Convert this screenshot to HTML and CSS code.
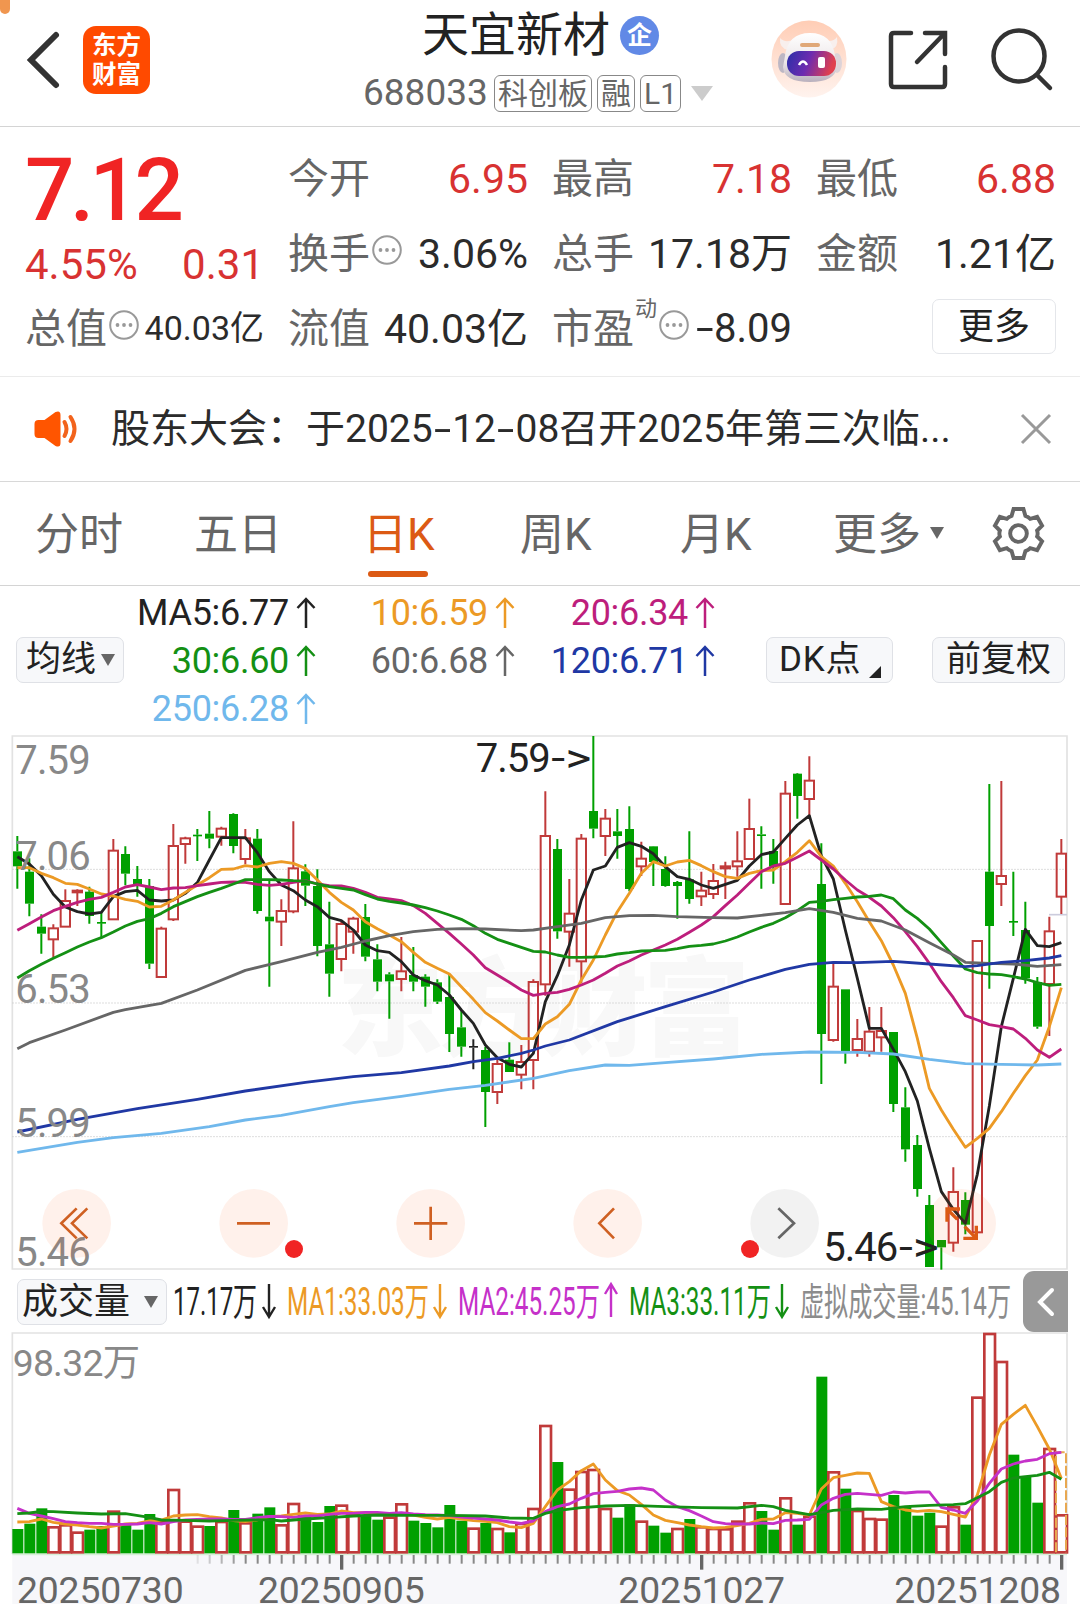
FILE: index.html
```html
<!DOCTYPE html>
<html lang="zh-CN">
<head>
  <meta charset="UTF-8">
  <title>天宜新材 688033</title>
  <link rel="stylesheet" href="styles.css">
</head>
<body>

<header class="header">
  <span class="corner"></span>
  <svg class="back" viewBox="0 0 36 60"><path d="M31 5 L6 30 L31 55"/></svg>
  <div class="logo">东方<br>财富</div>
  <div class="title">
    <div class="name">天宜新材<span class="badge">企</span></div>
    <div class="code">
      <span class="num">688033</span>
      <span class="tag">科创板</span>
      <span class="tag">融</span>
      <span class="tag">L1</span>
      <svg class="caret" viewBox="0 0 22 15"><path d="M0 0H22L11 15Z"/></svg>
    </div>
  </div>
  <svg class="robot" viewBox="0 0 76 78">
    <defs>
      <linearGradient id="halo" x1="0" y1="0" x2="0" y2="1">
        <stop offset="0" stop-color="#ffcdb5"/><stop offset="1" stop-color="#fff3ee"/>
      </linearGradient>
      <linearGradient id="visor" x1="0" y1="0" x2="1" y2="0.2">
        <stop offset="0" stop-color="#2a2fa8"/><stop offset="0.5" stop-color="#6d2bb0"/><stop offset="1" stop-color="#e0404f"/>
      </linearGradient>
      <linearGradient id="helmet" x1="0" y1="0" x2="0" y2="1">
        <stop offset="0" stop-color="#ffffff"/><stop offset="0.6" stop-color="#ece6e8"/><stop offset="1" stop-color="#b9b0bd"/>
      </linearGradient>
    </defs>
    <ellipse cx="38" cy="39" rx="37.5" ry="38.5" fill="url(#halo)"/>
    <path d="M9 18 Q8 28 17 30 L23 20 Q13 23 9 18Z M66 17 Q68 28 59 30 L52 20 Q62 23 66 17Z" fill="#f8efed"/>
    <ellipse cx="12" cy="43" rx="5" ry="10" fill="#bdb7c4"/>
    <ellipse cx="66" cy="43" rx="5" ry="10" fill="#ddd3d8"/>
    <path d="M14 36 Q17 13 39 13 Q61 13 64 36 L66 47 Q64 62 39 62 Q13 62 12 47Z" fill="url(#helmet)"/>
    <rect x="16" y="31" width="49" height="25" rx="12" fill="url(#visor)"/>
    <rect x="29" y="23" width="20" height="4" rx="2" fill="#e0a878"/>
    <path d="M28 45 Q32 38 36 45" fill="none" stroke="#fff" stroke-width="2.5"/>
    <rect x="47" y="37" width="7" height="11" rx="2" fill="#fff"/>
  </svg>
  <svg class="share" viewBox="0 0 60 60"><path d="M23 3H6Q3 3 3 6V54Q3 57 6 57H54Q57 57 57 54V37M37 3H57V24M55 5L29 32"/></svg>
  <svg class="search" viewBox="0 0 62 64"><circle cx="28" cy="29" r="25.5"/><path d="M46 48L59 61"/></svg>
</header>

<section class="quote">
  <div class="col first">
    <div class="price">7.12</div>
    <div class="row change up"><span>4.55%</span><span>0.31</span></div>
    <div class="row"><span class="label">总值</span><svg class="dots" viewBox="0 0 30 30"><use href="#dots"/></svg><span class="small">40.03亿</span></div>
  </div>
  <div class="col">
    <div class="row"><span class="label">今开</span><span class="up">6.95</span></div>
    <div class="row"><span class="label">换手</span><svg class="dots" viewBox="0 0 30 30"><use href="#dots"/></svg><span>3.06%</span></div>
    <div class="row"><span class="label">流值</span><span>40.03亿</span></div>
  </div>
  <div class="col">
    <div class="row"><span class="label">最高</span><span class="up">7.18</span></div>
    <div class="row"><span class="label">总手</span><span>17.18万</span></div>
    <div class="row"><span class="label">市盈<sup>动</sup></span><svg class="dots" viewBox="0 0 30 30"><use href="#dots"/></svg><span class="pe"><i class="dash">-</i>8.09</span></div>
  </div>
  <div class="col">
    <div class="row"><span class="label">最低</span><span class="up">6.88</span></div>
    <div class="row"><span class="label">金额</span><span>1.21亿</span></div>
    <div class="row"><button class="more">更多</button></div>
  </div>
</section>

<section class="notice">
  <svg class="horn" viewBox="0 0 44 38">
    <path class="body" d="M5 10H11L22 2Q27 0 27 5V33Q27 38 22 36L11 28H5Q1 28 1 24V14Q1 10 5 10Z"/>
    <path class="wave" d="M31 12Q35 19 31 26M37 7Q45 19 37 31"/>
  </svg>
  <div class="notice-text">股东大会：于2025<i class="dash">-</i>12<i class="dash">-</i>08召开2025年第三次临...</div>
  <svg class="close" viewBox="0 0 30 30"><path d="M1 1L29 29M29 1L1 29"/></svg>
</section>

<nav class="tabs">
  <span>分时</span>
  <span>五日</span>
  <span class="active">日K</span>
  <span>周K</span>
  <span>月K</span>
  <span>更多<svg class="tri" viewBox="0 0 14 12"><path d="M0 0H14L7 12Z"/></svg></span>
  <svg class="gear" viewBox="0 0 54 54">
    <path d="M22 2H32L34 9Q37 10 39 12L46 10L51 19L46 24Q47 27 46 30L51 35L46 44L39 42Q37 44 34 45L32 52H22L20 45Q17 44 15 42L8 44L3 35L8 30Q7 27 8 24L3 19L8 10L15 12Q17 10 20 9Z"/>
    <circle cx="27" cy="27" r="8.500"/>
  </svg>
</nav>

<section class="averages">
  <button class="chip">均线<svg class="tri" viewBox="0 0 14 12"><path d="M0 0H14L7 12Z"/></svg></button>
  <div class="ma-list">
    <span class="ma5">MA5:6.77<svg viewBox="0 0 20 32"><use href="#up"/></svg></span>
    <span class="ma10">10:6.59<svg viewBox="0 0 20 32"><use href="#up"/></svg></span>
    <span class="ma20">20:6.34<svg viewBox="0 0 20 32"><use href="#up"/></svg></span>
    <span class="ma30">30:6.60<svg viewBox="0 0 20 32"><use href="#up"/></svg></span>
    <span class="ma60">60:6.68<svg viewBox="0 0 20 32"><use href="#up"/></svg></span>
    <span class="ma120">120:6.71<svg viewBox="0 0 20 32"><use href="#up"/></svg></span>
    <span class="ma250">250:6.28<svg viewBox="0 0 20 32"><use href="#up"/></svg></span>
  </div>
  <button class="chip dk">DK点<svg viewBox="0 0 12 12"><path d="M12 0V12H0Z"/></svg></button>
  <button class="chip fq">前复权</button>
</section>

<svg class="kline" viewBox="0 0 3240 1623">
  <text class="watermark" x="1010" y="950" textLength="1240">东方财富</text>
  <path class="frame" d="M37 1617V18H3201V1617Z"/>
  <path class="grid" d="M37 418H3201M37 819H3201M37 1220H3201"/>
  <path class="last" d="M3147 554H3201"/>
  <g id="candles"></g>
  <g id="lines"></g>
  <g class="axis">
    <text x="46" y="132" textLength="226">7.59</text>
    <text x="46" y="420" textLength="226">7.06</text>
    <text x="46" y="820" textLength="226">6.53</text>
    <text x="46" y="1220" textLength="226">5.99</text>
    <text x="46" y="1608" textLength="226">5.46</text>
  </g>
  <g class="mark">
    <text x="1427" y="125" textLength="225">7.59</text>
    <text x="1654" y="125" textLength="120" lengthAdjust="spacingAndGlyphs">-&gt;</text>
    <text x="2470" y="1592" textLength="225">5.46</text>
    <text x="2697" y="1592" textLength="120" lengthAdjust="spacingAndGlyphs">-&gt;</text>
  </g>
  <g class="controls">
    <circle cx="230" cy="1480" r="103"/>
    <circle cx="761" cy="1480" r="103"/>
    <circle cx="1292" cy="1480" r="103"/>
    <circle cx="1823" cy="1480" r="103"/>
    <circle class="off" cx="2354" cy="1480" r="103"/>
    <circle cx="2885" cy="1480" r="103"/>
    <path d="M230 1435L184 1480L230 1525M262 1435L216 1480L262 1525"/>
    <path d="M711 1480H810"/>
    <path d="M1242 1480H1342M1292 1430V1530"/>
    <path d="M1842 1435L1798 1480L1842 1525"/>
    <path class="off" d="M2335 1435L2382 1480L2335 1525"/>
    <path class="expand" d="M2880 1437H2841V1475M2841 1437L2872 1468M2890 1525H2929V1487M2929 1525L2894 1490"/>
  </g>
  <circle class="dot" cx="882" cy="1557" r="27"/>
  <circle class="dot" cx="2250" cy="1557" r="27"/>
</svg>

<section class="vol-head">
  <button class="chip vol-btn">成交量<svg class="tri" viewBox="0 0 14 12"><path d="M0 0H14L7 12Z"/></svg></button>
  <svg class="vol-legend" viewBox="167 0 856 61">
    <g class="ma5"><text x="173" y="44" textLength="84" lengthAdjust="spacingAndGlyphs">17.17万</text><path d="M269 13V45M263 36L269 46L275 36"/></g>
    <g class="ma10"><text x="287" y="44" textLength="142" lengthAdjust="spacingAndGlyphs">MA1:33.03万</text><path d="M440 13V45M434 36L440 46L446 36"/></g>
    <g class="vma2"><text x="458" y="44" textLength="142" lengthAdjust="spacingAndGlyphs">MA2:45.25万</text><path d="M611 46V14M605 23L611 13L617 23"/></g>
    <g class="ma30"><text x="629" y="44" textLength="142" lengthAdjust="spacingAndGlyphs">MA3:33.11万</text><path d="M782 13V45M776 36L782 46L788 36"/></g>
    <g class="virtual"><text x="800" y="44" textLength="211" lengthAdjust="spacingAndGlyphs">虚拟成交量:45.14万</text></g>
  </svg>
  <div class="side"><svg viewBox="0 0 18 30"><path d="M15 3L3 15L15 27"/></svg></div>
</section>

<svg class="volume" viewBox="0 36 3240 816">
  <rect class="dates-bg" x="37" y="702" width="3164" height="150"/>
  <path class="frame" d="M37 702V39H3201V702"/>
  <text class="vol-max" x="38" y="168" textLength="382">98.32万</text>
  <path class="base" d="M37 703H3201"/>
  <g id="bars"></g>
  <path class="predict" d="M3168 697V397H3198V697"/>
  <g id="vlines"></g>
  <g id="ticks"></g>
  <g class="dates">
    <text x="51" y="849" textLength="500">20250730</text>
    <text x="774" y="849" textLength="500">20250905</text>
    <text x="1855" y="849" textLength="500">20251027</text>
    <text x="2683" y="849" textLength="500">20251208</text>
  </g>
</svg>

<svg class="defs">
  <defs>
    <g id="dots">
      <circle cx="15" cy="15" r="13.8" fill="none" stroke="#999" stroke-width="2"/>
      <circle cx="8.5" cy="15" r="1.9" fill="#999"/><circle cx="15" cy="15" r="1.9" fill="#999"/><circle cx="21.5" cy="15" r="1.9" fill="#999"/>
    </g>
    <path id="up" d="M10 31V2M1.500 11L10 2L18.500 11" fill="none" stroke="currentColor" stroke-width="2.500"/>
  </defs>
</svg>

<script src="chart.js"></script>
</body>
</html>
```

FILE: styles.css
```css
* {
  box-sizing: border-box;
}

body {
  margin: 0;
  width: 1080px;
  height: 1604px;
  overflow: hidden;
  background: #fff;
  color: #2b2b2b;
  font-family: Roboto, "Noto Sans CJK SC", sans-serif;
}

svg {
  display: block;
  flex: none;
  overflow: visible;
}

button {
  font-family: inherit;
  color: #222;
  padding: 0;
}

.defs {
  width: 0;
  height: 0;
}

/* header */
.header {
  position: relative;
  display: flex;
  height: 127px;
  border-bottom: 1px solid #d4d4d4;
}

.corner {
  position: absolute;
  left: 0;
  top: 0;
  width: 10px;
  height: 14px;
  background: #f0964f;
  border-radius: 0 0 5px 5px;
}

.back {
  width: 36px;
  height: 60px;
  margin: 30px 0 0 25px;
  fill: none;
  stroke: #333;
  stroke-width: 6;
  stroke-linecap: round;
}

.logo {
  width: 67px;
  height: 68px;
  margin: 26px 0 0 22px;
  padding-top: 5px;
  border-radius: 13px;
  background: #ff4a00;
  color: #fff;
  font-size: 24.500px;
  font-weight: 700;
  line-height: 29px;
  text-align: center;
}

.title {
  width: 420px;
  margin-left: 213px;
}

.name {
  display: flex;
  align-items: center;
  height: 70px;
  padding-left: 59px;
  font-size: 47px;
  line-height: 70px;
  color: #222;
}

.badge {
  width: 39px;
  height: 39px;
  margin-left: 10px;
  border-radius: 50%;
  background: #6189e6;
  color: #fff;
  font-size: 25px;
  font-weight: 700;
  line-height: 39px;
  text-align: center;
}

.code {
  display: flex;
  align-items: center;
  height: 46px;
  color: #666;
}

.num {
  width: 131px;
  font-size: 37px;
  line-height: 46px;
}

.tag {
  height: 37px;
  margin-right: 5px;
  padding: 0 3px;
  border: 1.500px solid #888;
  border-radius: 6px;
  font-size: 30px;
  line-height: 35px;
}

.caret {
  width: 22px;
  height: 15px;
  margin-left: 5px;
  fill: #ccc;
}

.robot {
  width: 76px;
  height: 78px;
  margin: 20px 0 0 -12px;
}

.share {
  width: 60px;
  height: 60px;
  margin: 30px 0 0 41px;
  fill: none;
  stroke: #333;
  stroke-width: 4.500;
  stroke-linecap: round;
}

.search {
  width: 62px;
  height: 64px;
  margin: 27px 0 0 43px;
  fill: none;
  stroke: #333;
  stroke-width: 4.500;
  stroke-linecap: round;
}

/* quote panel */
.quote {
  display: flex;
  gap: 24px;
  height: 250px;
  padding: 12px 24px 0 25px;
  border-bottom: 1px solid #ebebeb;
}

.col {
  width: 240px;
  flex: none;
}

.first {
  width: 239px;
}

.row {
  display: flex;
  align-items: center;
  justify-content: space-between;
  height: 75px;
  font-size: 41px;
  line-height: 48px;
  white-space: nowrap;
}

.row span {
  padding-top: 4px;
}

.price {
  height: 87px;
  font-size: 87px;
  font-weight: 500;
  line-height: 102px;
  letter-spacing: -4.500px;
  color: #f02424;
}

.change {
  height: 64px;
  padding-top: 10px;
  font-size: 42px;
}

.first .row:last-child {
  height: 74px;
}

.label {
  position: relative;
  color: #666;
}

.label sup {
  position: absolute;
  left: 83px;
  top: -4px;
  font-size: 22px;
  line-height: 24px;
}

.label + .dots {
  width: 30px;
  height: 30px;
  margin: -4px auto 0 2px;
}

.label:has(sup) + .dots {
  margin-left: 25px;
}

.up {
  color: #d83232;
}

.row .small {
  padding-top: 2px;
  font-size: 34px;
}

.pe {
  font-size: 40px;
}

.dash {
  display: inline-block;
  width: 19.500px;
  font-style: normal;
  text-align: center;
  transform: scaleX(1.600);
}

.more {
  width: 124px;
  height: 55px;
  margin-left: auto;
  border: 1.500px solid #e4e6ea;
  border-radius: 7px;
  background: #fff;
  font-size: 36px;
  line-height: 50px;
}

/* notice */
.notice {
  display: flex;
  align-items: center;
  height: 105px;
  padding: 0 29px 0 33px;
  border-bottom: 1px solid #d8d8d8;
}

.horn {
  width: 45px;
  height: 38px;
}

.horn .body {
  fill: #ff5500;
}

.horn .wave {
  fill: none;
  stroke: #f2631c;
  stroke-width: 4;
  stroke-linecap: round;
}

.notice-text {
  margin: 0 auto 0 33px;
  font-size: 39px;
  line-height: 50px;
  white-space: nowrap;
}

.close {
  width: 30px;
  height: 30px;
  stroke: #999;
  stroke-width: 3;
}

/* tabs */
.tabs {
  display: grid;
  grid-template-columns: 159px 169px 157px 160px 153px 157px 54px;
  align-items: center;
  height: 104px;
  padding: 4px 0 0 35px;
  border-bottom: 1px solid #d4d4d4;
  color: #666;
  font-size: 44px;
  line-height: 99px;
}

.tabs span {
  position: relative;
  height: 99px;
  white-space: nowrap;
}

.tabs .active {
  color: #dc5a14;
}

.tabs .active::after {
  content: "";
  position: absolute;
  left: 5px;
  bottom: 8px;
  width: 60px;
  height: 6px;
  border-radius: 3px;
  background: #dc5a14;
}

.tri {
  display: inline-block;
  width: 14px;
  height: 12px;
  fill: #666;
}

.tabs .tri {
  margin: 0 0 11px 9px;
}

.gear {
  width: 53px;
  height: 53px;
  margin: -5px 0 0 2px;
  fill: none;
  stroke: #666;
  stroke-width: 4;
}

/* moving averages */
.averages {
  display: flex;
  height: 144px;
  padding: 3px 16px 0;
}

.chip {
  display: flex;
  align-items: center;
  height: 46px;
  border: 1.500px solid #dfe1e6;
  border-radius: 7px;
  background: #f7f8fa;
  font-size: 35px;
  line-height: 44px;
  white-space: nowrap;
}

.averages .chip {
  width: 108px;
  margin-top: 48px;
  padding-left: 9px;
  flex: none;
}

.averages .chip .tri {
  margin-left: 5px;
}

.averages .dk {
  width: 127px;
  margin-left: 51px;
  padding-left: 12px;
  letter-spacing: 0.8px;
}

.dk svg {
  width: 12px;
  height: 12px;
  margin: 23px 0 0 8px;
  fill: #222;
}

.averages .fq {
  width: 133px;
  margin-left: 39px;
  padding-left: 13px;
}

.ma-list {
  display: grid;
  grid-template-columns: 192px 199px 200px;
  grid-auto-rows: 48px;
  font-size: 36px;
  height: 144px;
}

.ma-list span {
  display: flex;
  justify-content: flex-end;
  align-items: center;
  letter-spacing: -0.3px;
}

.ma-list svg {
  width: 20px;
  height: 32px;
  margin-left: 7px;
}

.ma5 { color: #222; }
.ma10 { color: #ec9a25; }
.ma20 { color: #bd1e7c; }
.ma30 { color: #149014; }
.ma60 { color: #666; }
.ma120 { color: #2038a4; }
.ma250 { color: #70b8ec; }
.vma2 { color: #c531c9; }
.virtual { color: #8c8c8c; }

/* price chart, three units to a pixel */
.kline {
  width: 1080px;
  height: 541px;
}

.frame {
  fill: none;
  stroke: #e2e2e2;
  stroke-width: 5;
}

.grid {
  stroke: #ccc;
  stroke-width: 3;
  stroke-dasharray: 4 5;
}

.last {
  stroke: #ccd;
  stroke-width: 5;
}

.watermark {
  font-size: 320px;
  font-weight: 900;
  fill: #f8f8f8;
}

.axis text {
  font-size: 120px;
  fill: #888;
}

.mark text {
  font-size: 120px;
  fill: #222;
}

.candle {
  fill: none;
  stroke-width: 6;
}

.rise { stroke: #c03a3a; }
.fall { stroke: #00a000; fill: #00a000; }
.flat { stroke: #222; fill: #222; }

.candle .solid {
  stroke: none;
}

.line {
  fill: none;
  stroke: currentColor;
  stroke-width: 8.500;
  stroke-linejoin: round;
}

.controls circle {
  fill: #ff641e;
  fill-opacity: 0.090;
}

.controls circle.off {
  fill: #000;
  fill-opacity: 0.050;
}

.controls path {
  fill: none;
  stroke: #cf6022;
  stroke-width: 8;
}

.controls path.off {
  stroke: #666;
}

.controls path.expand {
  stroke: #dc5a14;
  stroke-width: 10;
}

.dot {
  fill: #f02424;
}

/* volume */
.vol-head {
  display: flex;
  height: 61px;
  padding: 0 12px 0 17px;
}

.vol-btn {
  width: 150px;
  margin-top: 8px;
  padding-left: 4px;
  font-size: 36px;
}

.vol-btn .tri {
  margin-left: 14px;
}

.vol-legend {
  width: 856px;
  height: 61px;
}

.vol-legend text {
  font-size: 38px;
  fill: currentColor;
}

.vol-legend path {
  fill: none;
  stroke: currentColor;
  stroke-width: 2.400;
}

.side {
  display: flex;
  align-items: center;
  justify-content: center;
  width: 45px;
  border-radius: 11px 0 0 11px;
  background: #999;
}

.side svg {
  width: 18px;
  height: 30px;
  fill: none;
  stroke: #fff;
  stroke-width: 4;
  stroke-linecap: round;
}

.volume {
  width: 1080px;
  height: 272px;
}

.vol-max {
  font-size: 112px;
  fill: #888;
}

.base {
  stroke: #d6efd6;
  stroke-width: 5;
}

.bar.rise {
  fill: #fff;
  stroke-width: 8;
}

.bar.fall {
  stroke: none;
}

.predict {
  fill: none;
  stroke: #e8a850;
  stroke-width: 6;
  stroke-dasharray: 30 7;
}

.dates-bg {
  fill: #f7f7fa;
}

.tick {
  stroke: #888;
  stroke-width: 6;
}

.tick.long {
  stroke: #666;
  stroke-width: 10;
}

.dates text {
  font-size: 112px;
  fill: #666;
}
```

FILE: chart.js
```js
// [type, high, body top, body bottom, low]
const candles = [
  ['g',318,364,409,476],['g',385,425,521,559],['g',553,590,611,671],['r',583,595,628,682],
  ['r',478,513,590,590],['r',478,482,487,528],['g',470,485,558,581],['g',548,576,580,622],
  ['r',327,362,568,568],['g',349,372,431,466],['g',408,447,462,500],['g',447,468,701,717],
  ['r',590,596,741,741],['r',282,348,568,573],['r',320,325,342,401],['g',297,314,317,393],
  ['g',243,311,326,355],['r',290,296,320,347],['g',250,252,348,370],['r',297,325,387,403],
  ['g',297,326,543,551],['g',450,560,574,770],['r',508,543,575,648],['r',274,415,544,550],
  ['g',403,424,467,528],['g',418,468,648,679],['g',515,643,731,800],['r',575,582,687,724],
  ['r',560,566,605,671],['g',522,561,680,694],['g',643,688,755,784],['g',727,733,754,866],
  ['r',621,724,747,784],['g',651,735,755,784],['g',733,740,770,830],['g',748,757,815,822],
  ['g',733,801,912,966],['g',842,892,950,980],['k',928,948,953,1018],['g',950,960,1086,1191],
  ['r',985,1002,1086,1122],['g',937,989,1026,1026],['r',945,996,1034,1078],['r',748,756,990,1078],
  ['r',184,318,763,797],['g',327,357,604,626],['r',447,551,605,710],['r',312,326,694,760],
  ['g',18,243,296,325],['r',237,266,318,378],['g',237,304,318,386],['g',229,297,477,484],
  ['r',335,386,409,438],['g',348,349,396,468],['g',379,417,468,470],['g',453,456,468,566],
  ['g',304,448,507,521],['r',425,482,499,528],['r',402,453,492,507],['r',395,409,415,507],
  ['r',304,394,409,440],['r',206,297,387,387],['g',289,313,317,476],['g',327,363,410,461],
  ['r',153,191,522,522],['g',129,131,198,266],['r',79,152,207,262],['g',340,462,912,1062],
  ['r',700,770,930,935],['g',778,778,965,1001],['r',867,927,960,980],['r',831,905,965,980],
  ['r',831,903,922,965],['g',906,906,1122,1146],['g',1072,1132,1258,1295],['g',1215,1245,1377,1400],
  ['g',1395,1425,1611,1611],['g',1530,1530,1552,1619],['r',1312,1386,1538,1565],['g',1387,1410,1484,1513],
  ['r',633,633,1507,1507],['g',162,425,588,776],['r',153,438,462,528],['g',425,573,577,618],
  ['g',515,600,745,761],['g',741,756,890,896],['r',560,604,762,918],['r',327,371,500,552]
];

const volumes = [
  627,611,565,622,616,638,629,618,575,612,629,582,606,510,605,620,618,606,570,610,581,562,
  616,552,590,606,558,557,585,585,599,593,553,602,609,622,555,602,626,609,627,637,612,567,
  318,426,509,456,450,567,593,553,605,617,638,627,597,622,627,628,605,550,573,629,535,614,
  590,170,457,506,573,597,599,525,560,587,578,620,562,614,233,42,126,404,469,548,387,586
];
const volumeColors = 'gggrrrggrgggrrrrgrgrggrrgggrrggrrgggggrgrgrrrgrrrrggrggrgrrrrrggrgrgrgrrrggggrrgrrrgggrr';

const ma5 = [380,402,437,493,531,545,552,547,500,485,481,510,513,510,490,458,390,323,323,323,368,425,465,482,510,530,562,572,600,645,662,667,695,735,752,765,795,840,880,945,983,1003,1011,970,815,737,645,510,420,408,352,338,349,371,410,440,448,465,475,463,451,408,374,366,325,285,257,378,447,600,745,895,895,958,1025,1113,1255,1385,1438,1480,1333,1128,890,745,598,647,650,638];
const ma10 = [413,413,430,443,460,463,477,492,498,508,514,531,529,510,487,465,443,418,417,407,411,400,395,400,415,450,487,517,540,575,596,615,635,667,697,715,732,770,808,848,873,900,926,926,882,860,823,750,690,615,545,490,430,395,408,396,391,407,425,440,445,430,422,420,395,367,332,380,408,460,515,575,632,705,790,925,1075,1140,1198,1252,1225,1195,1145,1090,1037,990,890,773];
const ma20 = [601,581,561,542,529,517,508,502,487,471,464,471,479,474,473,467,462,457,456,457,463,466,463,457,452,462,467,468,475,487,502,507,512,527,550,580,610,642,675,713,735,757,780,796,790,787,778,765,750,730,708,693,675,660,645,628,607,585,560,527,495,460,425,408,400,382,363,390,417,450,480,502,528,563,605,650,700,755,803,857,870,884,890,897,925,960,982,957];
const ma30 = [744,722,703,685,668,651,636,623,606,588,574,566,550,530,515,500,487,475,462,449,449,449,450,452,453,462,470,475,480,494,507,514,519,525,533,543,555,568,587,610,628,640,652,664,666,675,682,682,681,679,672,668,663,662,661,656,649,646,642,633,621,606,592,580,563,542,517,514,509,505,501,499,495,506,540,565,597,638,678,717,728,732,734,740,747,758,766,763];
const ma60 = {0:956,1:938,4:900,8:847,9:839,12:820,15:780,19:721,22:695,25:667,27:652,29:633,31:617,33:605,35:598,37:596,39:597,42:602,43:600,45:590,47:580,49:563,51:557,53:556,55:560,58:563,60:564,62:556,64:548,66:536,68:547,70:565,72:573,74:600,76:638,78:675,79:697,81:700,83:702,85:709,87:704};
const ma120 = {0:1206,5:1168,10:1136,15:1108,19:1083,24:1057,28:1040,32:1028,36:1008,38:995,40:985,42:970,43:960,44:948,46:930,50:875,54:830,58:786,61:750,64:718,66:703,68:697,70:698,73:694,76:702,79:710,80:707,82:697,84:692,86:684,87:677};
const ma250 = {0:1267,5:1237,8:1223,12:1210,16:1190,19:1170,22:1156,26:1130,28:1118,32:1099,36:1078,39:1066,43:1045,46:1022,49:1005,51:1006,54:998,58:987,62:973,66:966,70:967,73:972,76:988,79:1001,82:1003,85:1005,87:1002};

const v1 = [606,605,597,607,612,615,620,624,618,612,610,603,600,588,585,584,590,594,602,605,600,590,588,583,579,583,582,573,578,578,580,584,583,585,592,597,592,597,602,604,608,620,623,610,560,510,485,452,432,480,512,525,553,585,601,608,615,620,624,622,617,610,598,597,578,580,585,507,473,466,459,460,545,560,570,574,571,575,583,591,525,405,313,283,256,320,387,475];
const v2 = [565,580,588,596,605,608,610,610,613,613,612,608,612,605,600,598,597,597,598,598,593,589,590,592,588,588,583,580,580,577,577,580,578,582,584,585,587,591,594,597,600,606,610,603,575,560,552,535,521,517,514,507,504,510,540,560,572,588,605,611,612,612,609,611,601,600,598,555,535,523,520,523,526,516,519,516,516,562,570,580,543,490,447,432,423,418,401,397];
const v3 = {0:581,1:579,2:574,3:575,5:579,7:582,9:581,11:592,12:600,14:601,16:603,18:601,20:600,21:599,22:603,24:597,26:593,28:588,30:585,33:586,36:586,39:588,41:594,43:595,44:580,45:572,47:563,49:558,51:556,54:560,57:563,60:564,62:556,63:560,64:571,66:584,67:578,68:571,70:567,72:568,74:560,76:556,78:554,79:551,81:515,82:487,83:474,84:470,85:466,86:457,87:478};

const names = { r: 'rise', g: 'fall', k: 'flat' };

function xAt(i) {
  return 52 + 36 * i;
}

function line(data, cls) {
  const d = Object.keys(data).map((i, n) => (n ? 'L' : 'M') + xAt(Number(i)) + ' ' + data[i]).join('');
  return `<path class="line ${cls}" d="${d}"/>`;
}

let html = '';
candles.forEach(([type, high, top, bottom, low], i) => {
  const x = xAt(i);
  html += `<g class="candle ${names[type]}"><path d="M${x} ${high}V${top}M${x} ${bottom}V${low}"/>`;
  if (type === 'r') {
    html += `<rect x="${x - 14}" y="${top}" width="28" height="${bottom - top}"/>`;
  } else {
    html += `<rect class="solid" x="${x - 13}" y="${top}" width="27" height="${Math.max(bottom - top, 5)}"/>`;
  }
  html += '</g>';
});
document.getElementById('candles').innerHTML = html;

document.getElementById('lines').innerHTML =
  line(ma5, 'ma5') + line(ma10, 'ma10') + line(ma20, 'ma20') + line(ma30, 'ma30') +
  line(ma60, 'ma60') + line(ma120, 'ma120') + line(ma250, 'ma250');

html = '';
volumes.forEach((y, i) => {
  const x = xAt(i);
  if (volumeColors[i] === 'r') {
    html += `<rect class="bar rise" x="${x - 15}" y="${y}" width="32" height="${697 - y}"/>`;
  } else {
    html += `<rect class="bar fall" x="${x - 15}" y="${y}" width="33" height="${700 - y}"/>`;
  }
});
document.getElementById('bars').innerHTML = html;

document.getElementById('vlines').innerHTML = line(v1, 'ma10') + line(v2, 'vma2') + line(v3, 'ma30');

html = '';
for (let i = 15; i < 88; i++) {
  const long = i % 30 === 27;
  html += `<path class="tick${long ? ' long' : ''}" opacity="${Math.min(1, (i - 14) / 5)}" d="M${xAt(i) + 1} 705V${long ? 749 : 731}"/>`;
}
document.getElementById('ticks').innerHTML = html;
```
